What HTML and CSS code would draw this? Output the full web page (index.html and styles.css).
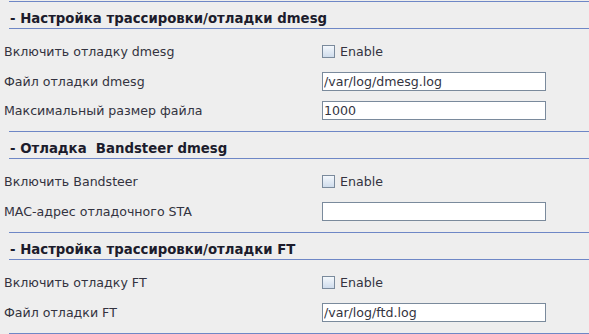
FILE: index.html
```html
<!DOCTYPE html>
<html lang="ru">
<head>
    <meta charset="UTF-8">
    <title>Настройка трассировки</title>
    <link rel="stylesheet" href="styles.css">
</head>
<body>
    <div class="page">
        <div class="section-head">- Настройка трассировки/отладки dmesg</div>
        <div class="rows">
            <div class="row row-check">
                <span class="label">Включить отладку dmesg</span>
                <label class="check"><span class="box"></span>Enable</label>
            </div>
            <div class="row">
                <span class="label">Файл отладки dmesg</span>
                <input class="field" type="text" value="/var/log/dmesg.log">
            </div>
            <div class="row">
                <span class="label">Максимальный размер файла</span>
                <input class="field" type="text" value="1000">
            </div>
        </div>

        <div class="section-head">- Отладка&nbsp; Bandsteer dmesg</div>
        <div class="rows">
            <div class="row row-check">
                <span class="label">Включить Bandsteer</span>
                <label class="check"><span class="box"></span>Enable</label>
            </div>
            <div class="row">
                <span class="label">MAC-адрес отладочного STA</span>
                <input class="field" type="text" value="">
            </div>
        </div>

        <div class="section-head">- Настройка трассировки/отладки FT</div>
        <div class="rows">
            <div class="row row-check">
                <span class="label">Включить отладку FT</span>
                <label class="check"><span class="box"></span>Enable</label>
            </div>
            <div class="row">
                <span class="label">Файл отладки FT</span>
                <input class="field" type="text" value="/var/log/ftd.log">
            </div>
        </div>
        <div class="section-end"></div>
    </div>
</body>
</html>
```

FILE: styles.css
```css
body {
    margin: 0;
    background: #eeeeee;
    font-family: 'DejaVu Sans', sans-serif;
    font-size: 12.6px;
    color: #333340;
    overflow: hidden;
}

.page {
    padding-top: 1px;
}

.section-head {
    margin-left: 9px;
    height: 26px;
    border-top: 1px solid #6e87c6;
    border-bottom: 1px solid #6e87c6;
    display: flex;
    align-items: flex-end;
    padding-left: 1px;
    box-sizing: content-box;
    font-weight: bold;
    font-size: 13.3px;
    line-height: 18px;
    color: #1c1c2c;
}

.rows {
    padding: 7px 0 6px;
}

.row {
    display: grid;
    grid-template-columns: 322px 1fr;
    align-items: center;
    height: 29px;
}

.row-check {
    height: 31px;
}

.label {
    padding-left: 4px;
}

.check {
    display: flex;
    align-items: center;
    gap: 5px;
}

.box {
    width: 11px;
    height: 11px;
    border: 1px solid #7a8a9c;
    background: linear-gradient(#f4f8fc, #cfdcec);
}

.field {
    width: 224px;
    height: 19px;
    box-sizing: border-box;
    margin: 0;
    padding: 0 0 0 1px;
    border: 1px solid #7a8a9c;
    background: #fff;
    font-family: 'DejaVu Sans', sans-serif;
    font-size: 12.6px;
    color: #333340;
    outline: none;
}

.section-end {
    margin-left: 9px;
    border-top: 1px solid #6e87c6;
}
```
